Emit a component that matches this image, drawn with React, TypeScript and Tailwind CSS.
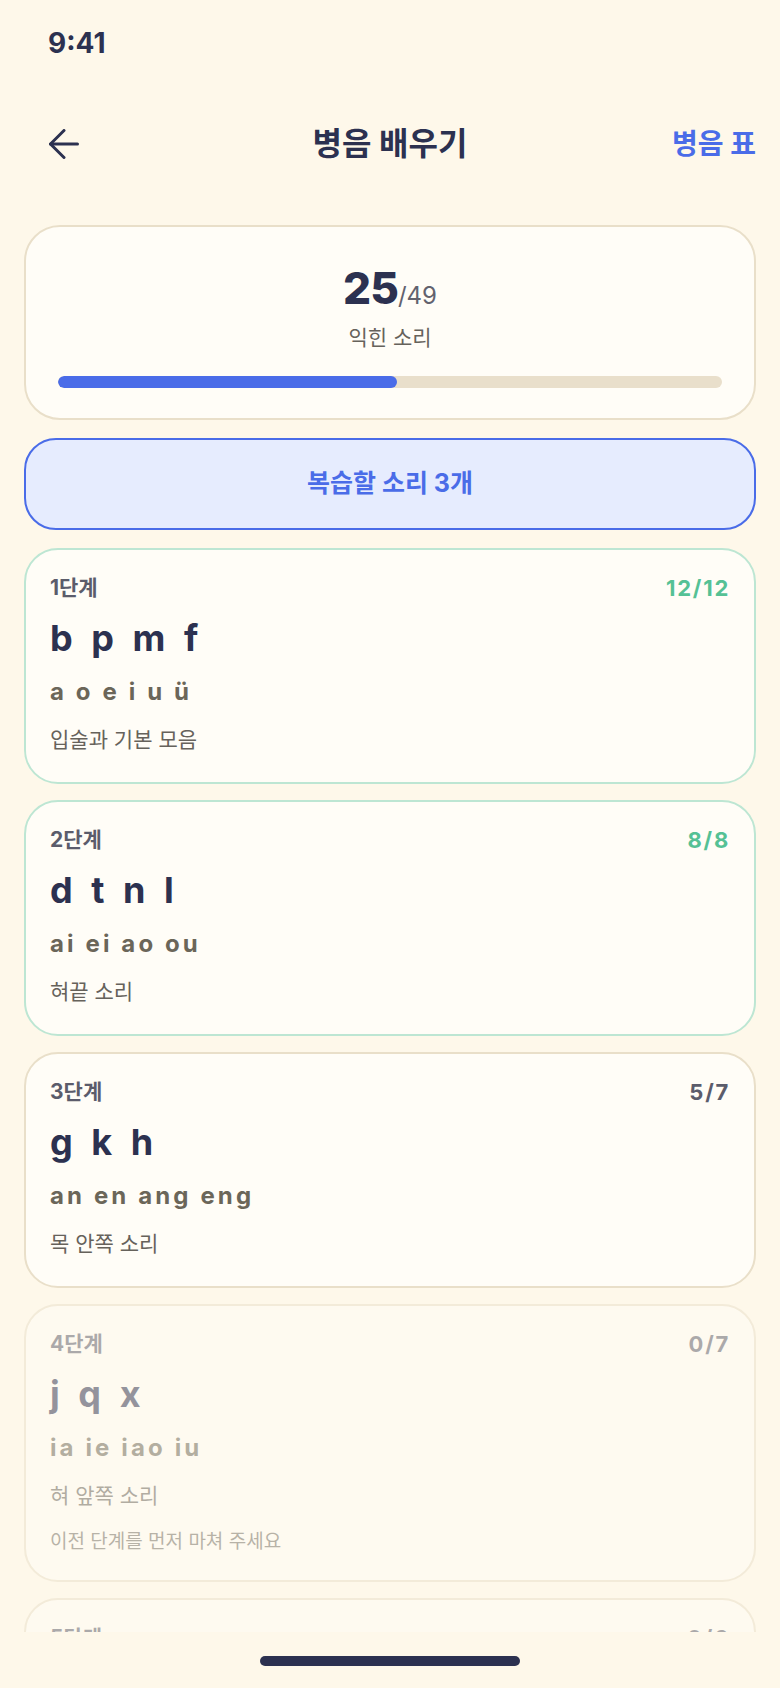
import React from "react";

type Stage = {
  label: string;
  count: string;
  initials: string;
  finals: string;
  desc: string;
  tone: "done" | "open" | "locked";
  note?: string;
};

const STAGES: Stage[] = [
  { label: "1단계", count: "12/12", initials: "b p m f", finals: "a o e i u ü", desc: "입술과 기본 모음", tone: "done" },
  { label: "2단계", count: "8/8", initials: "d t n l", finals: "ai ei ao ou", desc: "혀끝 소리", tone: "done" },
  { label: "3단계", count: "5/7", initials: "g k h", finals: "an en ang eng", desc: "목 안쪽 소리", tone: "open" },
  {
    label: "4단계",
    count: "0/7",
    initials: "j q x",
    finals: "ia ie iao iu",
    desc: "혀 앞쪽 소리",
    tone: "locked",
    note: "이전 단계를 먼저 마쳐 주세요",
  },
  {
    label: "5단계",
    count: "0/6",
    initials: "zh ch sh r",
    finals: "ua uo uai ui",
    desc: "혀 말아 올리는 소리",
    tone: "locked",
    note: "이전 단계를 먼저 마쳐 주세요",
  },
];

const FONT = { fontFamily: 'Inter, "Noto Sans CJK KR", "Noto Sans", sans-serif' };

function StageCard({ s }: { s: Stage }) {
  const border =
    s.tone === "done" ? "border-[#BDE6D3]" : "border-[#E9DFC9]";
  return (
    <div
      className={`shrink-0 rounded-[34px] border-2 ${border} bg-[#FFFDF7] px-[24px] pt-[26px] ${
        s.note ? "pb-[26px]" : "pb-[28px]"
      } ${s.tone === "locked" ? "opacity-50" : ""}`}
    >
      <div className="flex items-center justify-between h-[24px]">
        <span className="text-[21px] leading-[24px] font-bold text-[#5B5C6B]">{s.label}</span>
        <span
          className={`text-[22px] leading-[24px] font-bold tracking-[0.08em] ${
            s.tone === "done" ? "text-[#55C195]" : "text-[#5B5C6B]"
          }`}
        >
          {s.count}
        </span>
      </div>
      <div className="mt-[18px] text-[36px] leading-[40px] font-bold tracking-[0.14em] text-[#2C3150] whitespace-pre">
        {s.initials}
      </div>
      <div className="mt-[20px] text-[24px] leading-[28px] font-bold tracking-[0.13em] text-[#6B6659]">
        {s.finals}
      </div>
      <div className="mt-[20px] text-[21px] leading-[28px] text-[#66625B]">{s.desc}</div>
      {s.note && (
        <div className="mt-[20px] text-[19px] leading-[24px] text-[#736F66]">{s.note}</div>
      )}
    </div>
  );
}

export default function App() {
  return (
    <div className="w-[780px] h-[1688px] bg-[#FEF8EA] flex flex-col overflow-hidden" style={FONT}>
      {/* status bar */}
      <div className="h-[100px] shrink-0 pl-[48px] pt-[27px]">
        <span className="text-[28px] leading-[32px] font-bold text-[#2C3150]">9:41</span>
      </div>

      {/* header */}
      <div className="h-[88px] shrink-0 grid grid-cols-[160px_1fr_160px] items-center px-[24px]">
        <div className="pl-[25px] flex items-center">
          <svg width="30" height="30" viewBox="0 0 30 30" fill="none" stroke="#2C3150" strokeWidth="3" strokeLinecap="round" strokeLinejoin="round">
            <path d="M28.5 15H1.5" />
            <path d="M15 1.5L1.5 15L15 28.5" />
          </svg>
        </div>
        <h1 className="text-center text-[32px] leading-[40px] font-bold text-[#2C3150]">병음 배우기</h1>
        <div className="text-right text-[28px] leading-[36px] font-bold text-[#4A6CE8]">병음 표</div>
      </div>

      {/* content */}
      <div className="flex-1 overflow-hidden px-[24px] pt-[37px] flex flex-col gap-[16px]">
        <div className="shrink-0 rounded-[36px] border-2 border-[#E9DFC9] bg-[#FFFDF7] px-[32px] pt-[37px] pb-[30px]">
          <div className="flex items-baseline justify-center h-[48px]">
            <span className="text-[44px] leading-[48px] font-extrabold text-[#2C3150] tracking-[-0.02em]">25</span>
            <span className="text-[24px] leading-[48px] text-[#62626E]">/49</span>
          </div>
          <div className="mt-[11px] text-center text-[21px] leading-[29px] text-[#66625B]">익힌 소리</div>
          <div className="mt-[24px] h-[12px] rounded-full bg-[#E9DFCB] overflow-hidden">
            <div className="h-full rounded-full bg-[#4A6CE8]" style={{ width: `${(25 / 49) * 100}%` }} />
          </div>
        </div>

        <button className="shrink-0 my-[2px] h-[92px] rounded-[32px] border-2 border-[#4A6CE8] bg-[#E6ECFE] text-[25px] font-bold text-[#4A6CE8]">
          복습할 소리 3개
        </button>

        {STAGES.map((s) => (
          <StageCard key={s.label} s={s} />
        ))}
      </div>

      {/* home indicator */}
      <div className="h-[56px] shrink-0 flex justify-center pt-[24px]">
        <div className="w-[260px] h-[10px] rounded-full bg-[#2C3150]" />
      </div>
    </div>
  );
}
